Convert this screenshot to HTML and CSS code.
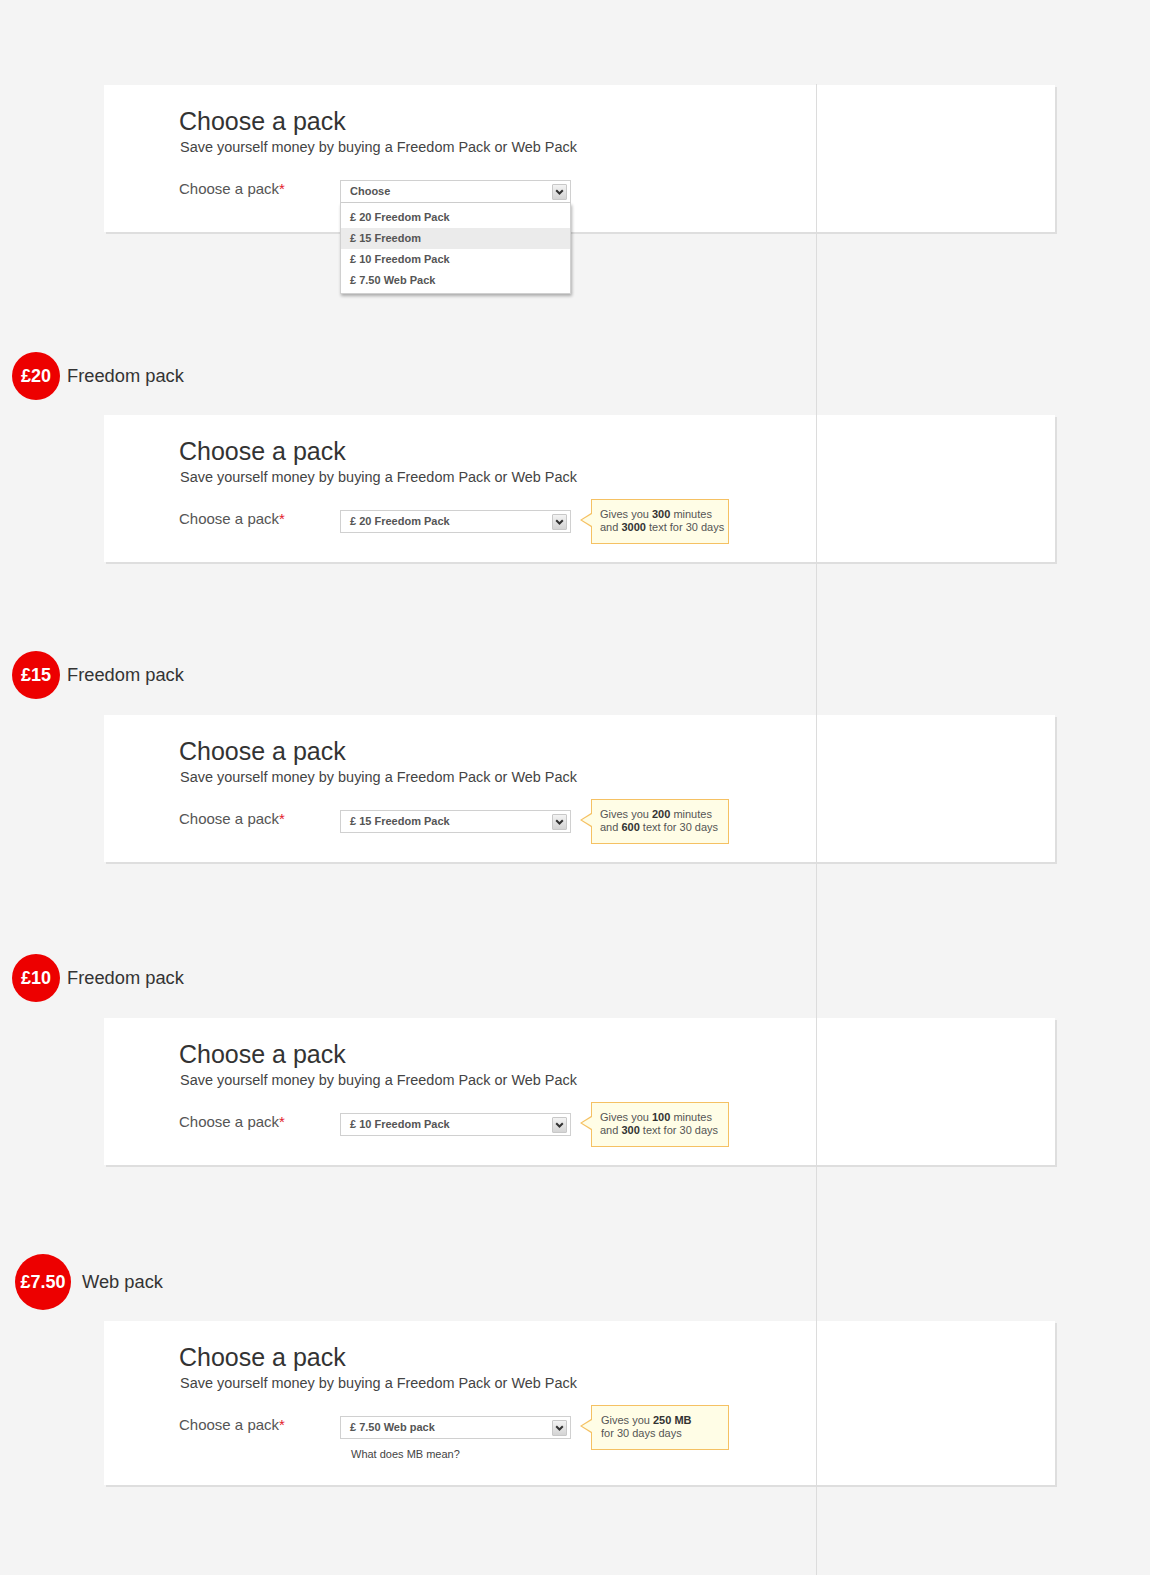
FILE: index.html
```html
<!DOCTYPE html>
<html lang="en">
<head>
<meta charset="utf-8">
<title>Choose a pack</title>
<link rel="stylesheet" href="styles.css">
</head>
<body>
<div class="page">

  <div class="card">
    <h1 class="card-title">Choose a pack</h1>
    <p class="card-sub">Save yourself money by buying a Freedom Pack or Web Pack</p>
    <div class="form-row">
      <label class="form-label">Choose a pack<span class="req">*</span></label>
      <div class="field">
        <div class="select">
          <span class="select-value">Choose</span>
          <span class="select-btn"><svg width="9" height="6" viewBox="0 0 9 6"><path d="M1.2 1.2 L4.5 4.5 L7.8 1.2" fill="none" stroke="#333" stroke-width="2"/></svg></span>
        </div>
        <ul class="dropdown">
          <li class="dropdown-item">£ 20 Freedom Pack</li>
          <li class="dropdown-item dropdown-item--active">£ 15 Freedom</li>
          <li class="dropdown-item">£ 10 Freedom Pack</li>
          <li class="dropdown-item">£ 7.50 Web Pack</li>
        </ul>
      </div>
    </div>
  </div>

  <div class="pack-head pack-head--first">
    <span class="badge">£20</span>
    <span class="pack-name">Freedom pack</span>
  </div>
  <div class="card">
    <h1 class="card-title">Choose a pack</h1>
    <p class="card-sub">Save yourself money by buying a Freedom Pack or Web Pack</p>
    <div class="form-row">
      <label class="form-label">Choose a pack<span class="req">*</span></label>
      <div class="field">
        <div class="select">
          <span class="select-value">£ 20 Freedom Pack</span>
          <span class="select-btn"><svg width="9" height="6" viewBox="0 0 9 6"><path d="M1.2 1.2 L4.5 4.5 L7.8 1.2" fill="none" stroke="#333" stroke-width="2"/></svg></span>
        </div>
      </div>
      <div class="tip">Gives you <b>300</b> minutes<br>and <b>3000</b> text for 30 days</div>
    </div>
  </div>

  <div class="pack-head">
    <span class="badge">£15</span>
    <span class="pack-name">Freedom pack</span>
  </div>
  <div class="card">
    <h1 class="card-title">Choose a pack</h1>
    <p class="card-sub">Save yourself money by buying a Freedom Pack or Web Pack</p>
    <div class="form-row">
      <label class="form-label">Choose a pack<span class="req">*</span></label>
      <div class="field">
        <div class="select">
          <span class="select-value">£ 15 Freedom Pack</span>
          <span class="select-btn"><svg width="9" height="6" viewBox="0 0 9 6"><path d="M1.2 1.2 L4.5 4.5 L7.8 1.2" fill="none" stroke="#333" stroke-width="2"/></svg></span>
        </div>
      </div>
      <div class="tip">Gives you <b>200</b> minutes<br>and <b>600</b> text for 30 days</div>
    </div>
  </div>

  <div class="pack-head pack-head--third">
    <span class="badge">£10</span>
    <span class="pack-name">Freedom pack</span>
  </div>
  <div class="card">
    <h1 class="card-title">Choose a pack</h1>
    <p class="card-sub">Save yourself money by buying a Freedom Pack or Web Pack</p>
    <div class="form-row">
      <label class="form-label">Choose a pack<span class="req">*</span></label>
      <div class="field">
        <div class="select">
          <span class="select-value">£ 10 Freedom Pack</span>
          <span class="select-btn"><svg width="9" height="6" viewBox="0 0 9 6"><path d="M1.2 1.2 L4.5 4.5 L7.8 1.2" fill="none" stroke="#333" stroke-width="2"/></svg></span>
        </div>
      </div>
      <div class="tip">Gives you <b>100</b> minutes<br>and <b>300</b> text for 30 days</div>
    </div>
  </div>

  <div class="pack-head pack-head--web">
    <span class="badge badge--lg">£7.50</span>
    <span class="pack-name">Web pack</span>
  </div>
  <div class="card card--help">
    <h1 class="card-title">Choose a pack</h1>
    <p class="card-sub">Save yourself money by buying a Freedom Pack or Web Pack</p>
    <div class="form-row">
      <label class="form-label">Choose a pack<span class="req">*</span></label>
      <div class="field">
        <div class="select">
          <span class="select-value">£ 7.50 Web pack</span>
          <span class="select-btn"><svg width="9" height="6" viewBox="0 0 9 6"><path d="M1.2 1.2 L4.5 4.5 L7.8 1.2" fill="none" stroke="#333" stroke-width="2"/></svg></span>
        </div>
        <p class="field-help">What does MB mean?</p>
      </div>
      <div class="tip tip--web">Gives you <b>250 MB</b><br>for 30 days days</div>
    </div>
  </div>

</div>
</body>
</html>
```

FILE: styles.css
```css
body {
  margin: 0;
  background: #f4f4f4;
  font-family: "Liberation Sans", Arial, Helvetica, sans-serif;
  color: #333;
}

.page {
  position: relative;
  min-height: 1575px;
  box-sizing: border-box;
  padding-top: 85px;
  overflow: hidden;
}

.page::after {
  content: "";
  position: absolute;
  left: 816px;
  top: 84px;
  bottom: 0;
  width: 1px;
  background: #dcdcdc;
  z-index: 5;
}

.card {
  margin-left: 104px;
  width: 951px;
  box-sizing: border-box;
  background: #fff;
  box-shadow: 2px 2px 0 #dedede;
  padding: 22px 0 29px 75px;
}

.card--help {
  padding-bottom: 24px;
}

.card-title {
  margin: 0;
  font-size: 25px;
  line-height: 28px;
  font-weight: normal;
  color: #333;
}

.card-sub {
  margin: 4px 0 0;
  padding-left: 1px;
  font-size: 14.45px;
  line-height: 17px;
  color: #444;
}

.form-row {
  display: flex;
  align-items: flex-start;
  margin-top: 24px;
}

.form-label {
  width: 161px;
  flex: none;
  font-size: 15px;
  line-height: 17px;
  color: #555;
}

.req {
  color: #e3202c;
}

.field {
  position: relative;
  width: 231px;
  flex: none;
}

.select {
  height: 23px;
  box-sizing: border-box;
  border: 1px solid #d0d0d0;
  background: #fff;
  display: flex;
  align-items: center;
  justify-content: space-between;
  padding: 0 3px 0 9px;
  font-size: 11px;
  line-height: 21px;
  font-weight: bold;
  color: #555;
}

.select-btn {
  width: 15px;
  height: 16px;
  box-sizing: border-box;
  border: 1px solid #c8c8c8;
  border-radius: 1px;
  background: linear-gradient(#f3f3f3, #d4d4d4);
  display: flex;
  align-items: center;
  justify-content: center;
}

.select-btn svg {
  display: block;
}

.dropdown {
  list-style: none;
  margin: 0;
  padding: 4px 0 2px;
  position: absolute;
  top: 100%;
  left: 0;
  right: 0;
  background: #fff;
  border: 1px solid #d0d0d0;
  border-top: 0;
  box-shadow: 1px 2px 3px rgba(0, 0, 0, 0.3);
  z-index: 3;
}

.dropdown-item {
  height: 21px;
  line-height: 21px;
  padding-left: 9px;
  font-size: 11px;
  font-weight: bold;
  color: #555;
}

.dropdown-item--active {
  background: #ebebeb;
}

.field-help {
  margin: 9px 0 0 11px;
  font-size: 11px;
  line-height: 13px;
  color: #444;
}

.tip {
  position: relative;
  flex: none;
  margin: -11px 0 -11px 20px;
  width: 138px;
  box-sizing: border-box;
  border: 1px solid #f5c163;
  background: #fffde6;
  padding: 8px 5px 9px 8px;
  font-size: 11px;
  line-height: 13px;
  color: #555;
  white-space: nowrap;
}

.tip--web {
  padding-left: 9px;
}

.tip b {
  color: #333;
}

.tip::before {
  content: "";
  position: absolute;
  left: -12px;
  top: 13px;
  border-style: solid;
  border-width: 7px 11px 7px 0;
  border-color: transparent #f5c163 transparent transparent;
}

.tip::after {
  content: "";
  position: absolute;
  left: -10px;
  top: 13.6px;
  border-style: solid;
  border-width: 6.4px 10px 6.4px 0;
  border-color: transparent #fffde6 transparent transparent;
}

.pack-head {
  display: flex;
  align-items: center;
  gap: 7px;
  padding-left: 12px;
  margin: 89px 0 16px;
}

.pack-head--first {
  margin-top: 120px;
  margin-bottom: 15px;
}

.pack-head--third {
  margin-top: 92px;
}

.pack-head--web {
  margin-top: 89px;
  margin-bottom: 11px;
  padding-left: 15px;
  gap: 11px;
}

.badge {
  width: 48px;
  height: 48px;
  flex: none;
  border-radius: 50%;
  background: #ed0000;
  color: #fff;
  font-weight: bold;
  font-size: 18px;
  display: flex;
  align-items: center;
  justify-content: center;
}

.badge--lg {
  width: 56px;
  height: 56px;
}

.pack-name {
  font-size: 18.3px;
  color: #333;
}
```
